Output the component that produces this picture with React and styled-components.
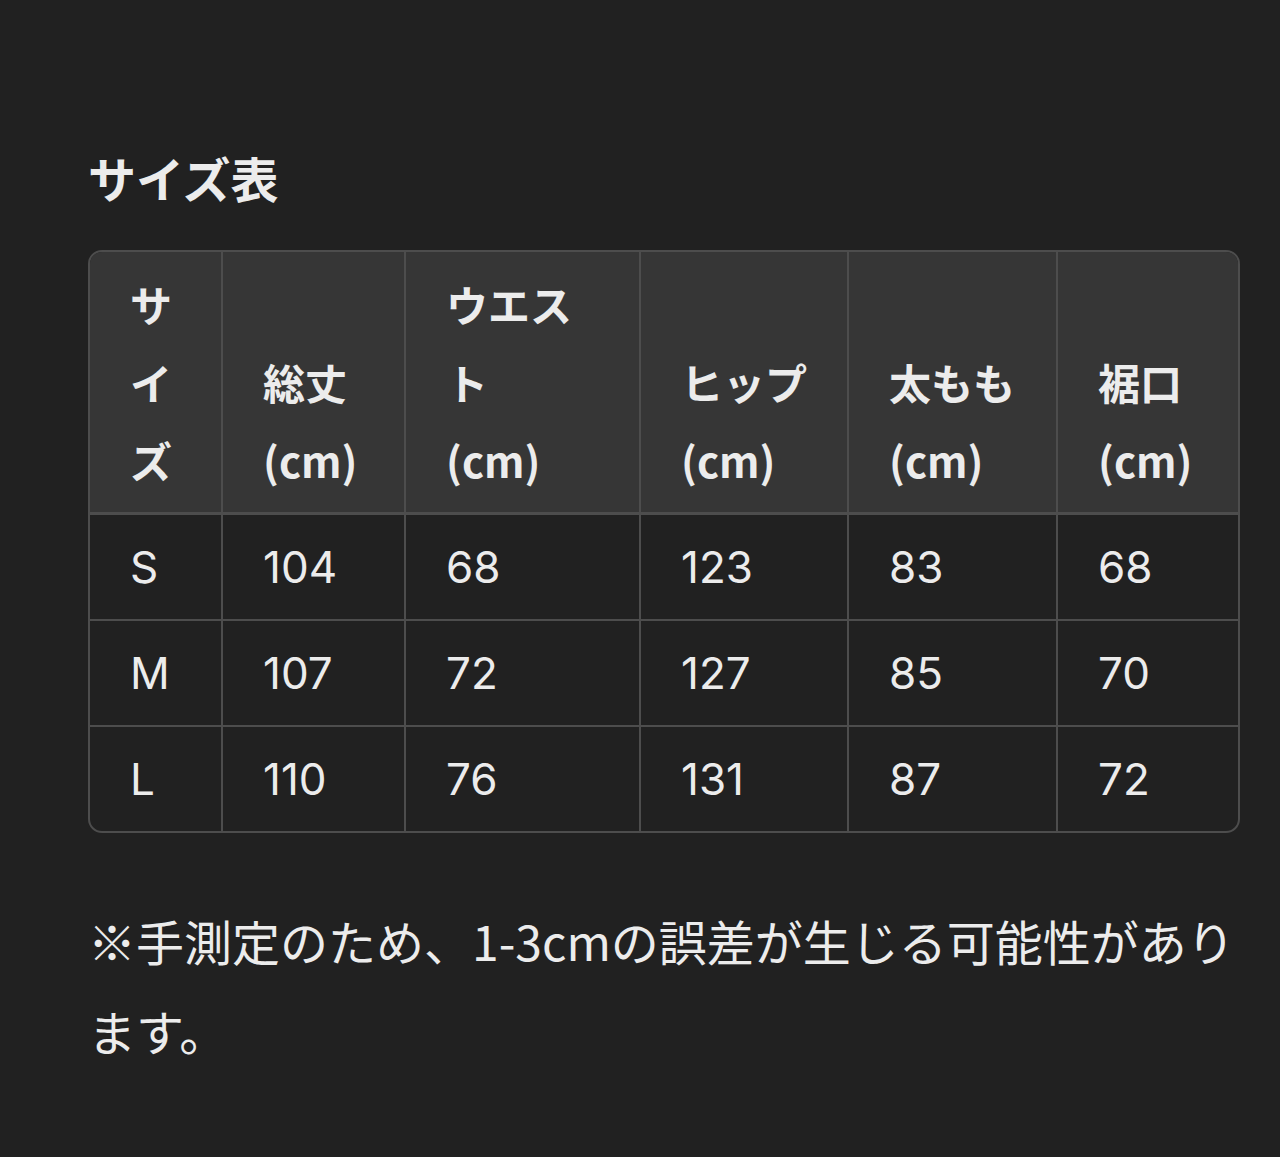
import React from "react";
import styled, { createGlobalStyle } from "styled-components";

const GlobalStyle = createGlobalStyle`
  html, body {
    margin: 0;
    padding: 0;
    background: #212121;
  }
  body {
    font-family: Inter, "Noto Sans CJK JP", sans-serif;
    color: #ececec;
  }
`;

const Page = styled.div`
  min-height: 1157px;
  box-sizing: border-box;
  padding: 141px 40px 0 88px;
  background: #212121;
`;

const Title = styled.h2`
  margin: 0 0 37px;
  font-size: 48px;
  line-height: 72px;
  font-weight: 700;
  color: #ececec;
  font-family: "Noto Sans CJK JP", sans-serif;
`;

const TableFrame = styled.div`
  width: 1152px;
  box-sizing: border-box;
  border: 2px solid #4d4d4d;
  border-radius: 14px;
  overflow: hidden;
`;

const Table = styled.table`
  width: 100%;
  table-layout: fixed;
  border-collapse: collapse;
`;

const HeadCell = styled.th`
  background: #363636;
  font-family: "Noto Sans CJK JP", sans-serif;
  font-weight: 700;
  font-size: 42px;
  line-height: 78px;
  text-align: left;
  vertical-align: bottom;
  padding: 13px 38px 13px 40px;
  color: #ececec;
  border-left: 2px solid #4d4d4d;
  border-bottom: 3px solid #4d4d4d;
  &:first-child {
    border-left: none;
  }
`;

const Unit = styled.span`
  display: block;
`;

const Cell = styled.td`
  font-size: 44px;
  line-height: 78px;
  font-weight: 400;
  text-align: left;
  vertical-align: middle;
  padding: 13px 38px 13px 40px;
  color: #ececec;
  border-left: 2px solid #4d4d4d;
  border-top: 2px solid #4d4d4d;
  &:first-child {
    border-left: none;
  }
`;

const Note = styled.p`
  margin: 62px 0 0;
  width: 1152px;
  font-family: "Noto Sans CJK JP", sans-serif;
  font-size: 48px;
  line-height: 90px;
  color: #ececec;
`;

const widths = [132, 183, 235, 208, 209, 181];

const headers = [
  ["サイズ", ""],
  ["総丈", "(cm)"],
  ["ウエスト", "(cm)"],
  ["ヒップ", "(cm)"],
  ["太もも", "(cm)"],
  ["裾口", "(cm)"],
];

const rows = [
  ["S", "104", "68", "123", "83", "68"],
  ["M", "107", "72", "127", "85", "70"],
  ["L", "110", "76", "131", "87", "72"],
];

export default function App() {
  return (
    <>
      <GlobalStyle />
      <Page>
        <Title>サイズ表</Title>
        <TableFrame>
          <Table>
            <colgroup>
              {widths.map((w, i) => (
                <col key={i} style={{ width: w }} />
              ))}
            </colgroup>
            <thead>
              <tr>
                {headers.map(([name, unit]) => (
                  <HeadCell key={name}>
                    {name}
                    {unit && <Unit>{unit}</Unit>}
                  </HeadCell>
                ))}
              </tr>
            </thead>
            <tbody>
              {rows.map((r) => (
                <tr key={r[0]}>
                  {r.map((c, i) => (
                    <Cell key={i}>{c}</Cell>
                  ))}
                </tr>
              ))}
            </tbody>
          </Table>
        </TableFrame>
        <Note>※手測定のため、1-3cmの誤差が生じる可能性があります。</Note>
      </Page>
    </>
  );
}
